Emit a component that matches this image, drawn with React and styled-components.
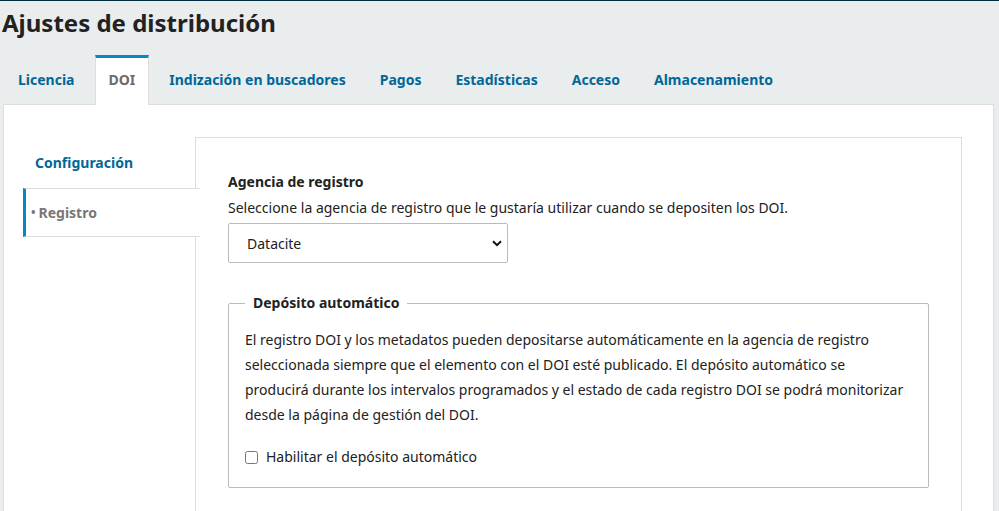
import styled, { createGlobalStyle } from "styled-components";

const GlobalStyle = createGlobalStyle`
  html, body {
    margin: 0;
    padding: 0;
    background: #eaedee;
    font-family: "Noto Sans", "Open Sans", sans-serif;
    color: #222;
  }
  * { box-sizing: border-box; }
`;

const Page = styled.div`
  border-top: 1px solid #002c40;
  min-height: 511px;
`;

const Header = styled.div`
  padding: 0 3px 0 2px;
`;

const Title = styled.h1`
  margin: 6px 0 0 0;
  font-size: 24px;
  line-height: 32px;
  font-weight: 700;
  color: #222;
`;

const Tabs = styled.div`
  display: flex;
  gap: 6px;
  margin-top: 16px;
  padding-left: 2px;
`;

const Tab = styled.div`
  position: relative;
  z-index: 1;
  height: 50px;
  margin-bottom: -1px;
  padding: 0 13px 4px 13px;
  display: flex;
  align-items: center;
  font-size: 14px;
  font-weight: 700;
  color: ${(p) => (p.active ? "#6b6b6b" : "#006798")};
  background: ${(p) => (p.active ? "#fff" : "transparent")};
  border: 1px solid ${(p) => (p.active ? "#ddd" : "transparent")};
  border-top: 3px solid ${(p) => (p.active ? "#008acb" : "transparent")};
  border-bottom: none;
`;

const Panel = styled.div`
  margin: 0 5px 0 3px;
  background: #fff;
  border: 1px solid #ddd;
  border-bottom: none;
  padding: 32px 31px 0 19px;
  display: flex;
  min-height: 410px;
`;

const Nav = styled.div`
  width: 172px;
  flex-shrink: 0;
  padding-top: 1px;
`;

const NavItem = styled.div`
  position: relative;
  z-index: 1;
  width: 177px;
  height: ${(p) => (p.active ? "49px" : "50px")};
  display: flex;
  align-items: center;
  font-size: 14px;
  font-weight: 700;
  color: ${(p) => (p.active ? "#777" : "#006798")};
  background: ${(p) => (p.active ? "#fff" : "transparent")};
  border-left: ${(p) => (p.active ? "3px solid #008acb" : "none")};
  border-top: 1px solid ${(p) => (p.active ? "#ddd" : "transparent")};
  border-bottom: 1px solid ${(p) => (p.active ? "#ddd" : "transparent")};
  padding-left: ${(p) => (p.active ? "5px" : "12px")};
  padding-bottom: 1px;
`;

const Bullet = styled.span`
  margin-right: 3px;
  font-size: 12px;
`;

const Content = styled.div`
  flex: 1;
  border: 1px solid #ddd;
  border-bottom: none;
  padding: 32px;
`;

const Label = styled.div`
  font-size: 14px;
  font-weight: 700;
  line-height: 24px;
  margin-bottom: 2px;
`;

const Description = styled.div`
  font-size: 14px;
  line-height: 24px;
`;

const SelectWrap = styled.div`
  position: relative;
  width: 280px;
  margin-top: 3px;
`;

const Select = styled.select`
  appearance: none;
  width: 100%;
  height: 40px;
  padding: 0 18px;
  font-family: inherit;
  font-size: 14px;
  color: #222;
  background: #fff;
  border: 1px solid #bbb;
  border-radius: 2px;
`;

const Chevron = styled.svg`
  position: absolute;
  right: 6px;
  top: 17px;
  pointer-events: none;
`;

const Fieldset = styled.fieldset`
  margin: 30px 0 0 0;
  padding: 0 16px 18px 16px;
  border: 1px solid #bbb;
  border-radius: 2px;
`;

const Legend = styled.legend`
  padding: 0 8px;
  font-size: 14px;
  font-weight: 700;
  line-height: 20px;
`;

const Para = styled.p`
  margin: 14px 0 18px 0;
  font-size: 14px;
  line-height: 25px;
`;

const CheckRow = styled.label`
  display: flex;
  align-items: center;
  font-size: 14px;
  line-height: 24px;

  input {
    width: 13px;
    height: 13px;
    margin: 0 8px 0 0;
  }
`;

const tabs = [
  "Licencia",
  "DOI",
  "Indización en buscadores",
  "Pagos",
  "Estadísticas",
  "Acceso",
  "Almacenamiento",
];

export default function App() {
  return (
    <Page>
      <GlobalStyle />
      <Header>
        <Title>Ajustes de distribución</Title>
        <Tabs>
          {tabs.map((t) => (
            <Tab key={t} active={t === "DOI"}>
              {t}
            </Tab>
          ))}
        </Tabs>
      </Header>
      <Panel>
        <Nav>
          <NavItem>Configuración</NavItem>
          <NavItem active>
            <Bullet>•</Bullet>Registro
          </NavItem>
        </Nav>
        <Content>
          <Label>Agencia de registro</Label>
          <Description>
            Seleccione la agencia de registro que le gustaría utilizar cuando se depositen los DOI.
          </Description>
          <SelectWrap>
            <Select defaultValue="datacite">
              <option value="datacite">Datacite</option>
            </Select>
            <Chevron width="10" height="7" viewBox="0 0 10 7">
              <path d="M1 1.2 L5 5.2 L9 1.2" fill="none" stroke="#111" strokeWidth="2" />
            </Chevron>
          </SelectWrap>
          <Fieldset>
            <Legend>Depósito automático</Legend>
            <Para>
              El registro DOI y los metadatos pueden depositarse automáticamente en la agencia de
              registro seleccionada siempre que el elemento con el DOI esté publicado. El depósito
              automático se producirá durante los intervalos programados y el estado de cada
              registro DOI se podrá monitorizar desde la página de gestión del DOI.
            </Para>
            <CheckRow>
              <input type="checkbox" />
              Habilitar el depósito automático
            </CheckRow>
          </Fieldset>
        </Content>
      </Panel>
    </Page>
  );
}
